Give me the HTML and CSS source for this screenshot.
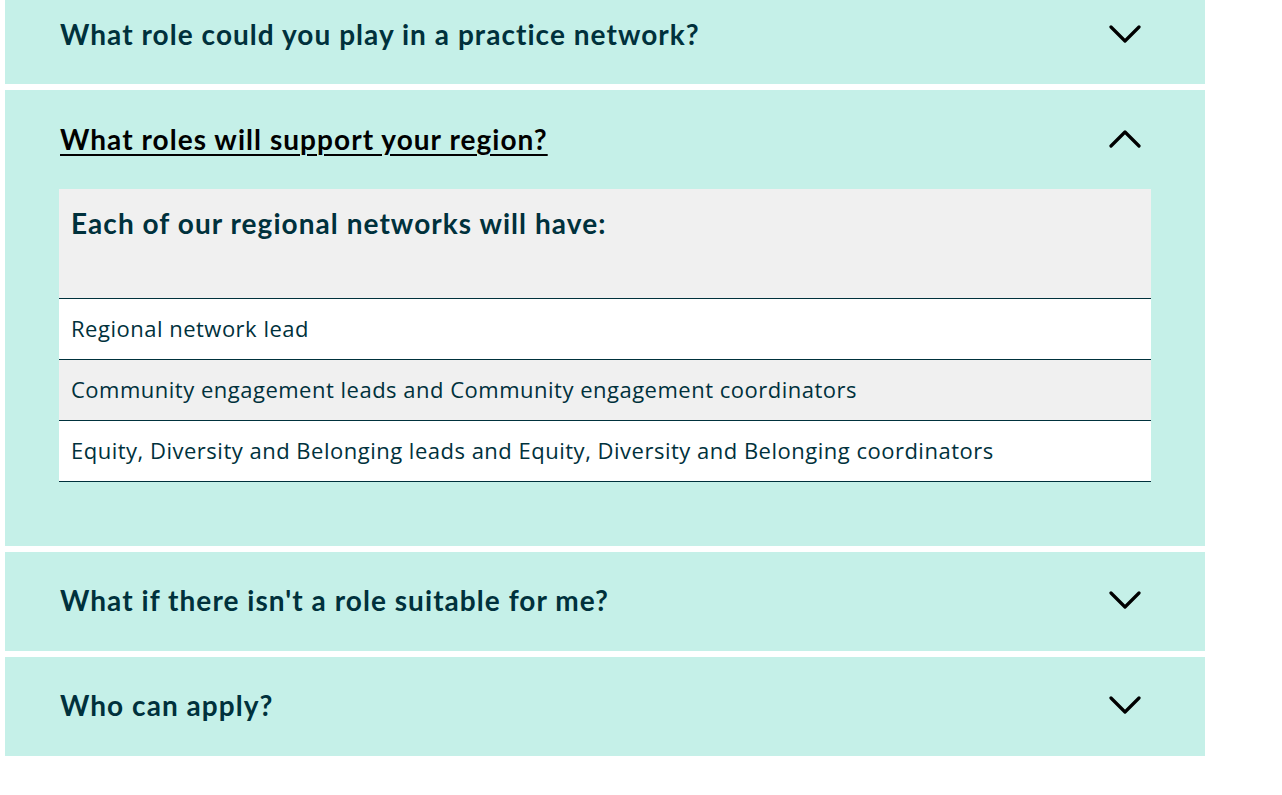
FILE: index.html
```html
<!DOCTYPE html>
<html lang="en">
<head>
<meta charset="utf-8">
<title>FAQ</title>
<link rel="stylesheet" href="styles.css">
</head>
<body>
<div class="accordion">
  <section class="item">
    <button class="item-head">
      <span class="item-title">What role could you play in a practice network?</span>
      <svg class="chev" width="32" height="18" viewBox="0 0 32 18"><polyline points="2,2 16,16 30,2" fill="none" stroke="#000" stroke-width="3.2" stroke-linecap="round" stroke-linejoin="round"/></svg>
    </button>
  </section>
  <section class="item open">
    <button class="item-head">
      <span class="item-title active">What roles will support your region?</span>
      <svg class="chev" width="32" height="18" viewBox="0 0 32 18"><polyline points="2,16 16,2 30,16" fill="none" stroke="#000" stroke-width="3.2" stroke-linecap="round" stroke-linejoin="round"/></svg>
    </button>
    <div class="item-body">
      <table class="roles">
        <thead>
          <tr><th>Each of our regional networks will have:</th></tr>
        </thead>
        <tbody>
          <tr class="white"><td>Regional network lead</td></tr>
          <tr class="grey"><td>Community engagement leads and Community engagement coordinators</td></tr>
          <tr class="white"><td>Equity, Diversity and Belonging leads and Equity, Diversity and Belonging coordinators</td></tr>
        </tbody>
      </table>
    </div>
  </section>
  <section class="item">
    <button class="item-head">
      <span class="item-title">What if there isn't a role suitable for me?</span>
      <svg class="chev" width="32" height="18" viewBox="0 0 32 18"><polyline points="2,2 16,16 30,2" fill="none" stroke="#000" stroke-width="3.2" stroke-linecap="round" stroke-linejoin="round"/></svg>
    </button>
  </section>
  <section class="item">
    <button class="item-head">
      <span class="item-title">Who can apply?</span>
      <svg class="chev" width="32" height="18" viewBox="0 0 32 18"><polyline points="2,2 16,16 30,2" fill="none" stroke="#000" stroke-width="3.2" stroke-linecap="round" stroke-linejoin="round"/></svg>
    </button>
  </section>
</div>
</body>
</html>
```

FILE: styles.css
```css
* { box-sizing: border-box; }
html, body { margin: 0; padding: 0; background: #fff; }
body { overflow: hidden; }

.accordion {
  width: 1200px;
  margin: -15px 0 0 5px;
  display: flex;
  flex-direction: column;
  gap: 6px;
}

.item {
  background: #c5f0e8;
}

.item-head {
  width: 100%;
  height: 99px;
  display: flex;
  align-items: center;
  justify-content: space-between;
  padding: 0 64px 2px 55px;
  border: 0;
  background: transparent;
  cursor: pointer;
  text-align: left;
}

.item-title {
  font-family: "Lato", "Noto Sans", sans-serif;
  font-weight: 700;
  font-size: 28px;
  color: #00313c;
  letter-spacing: 1.05px;
}

.item-title.active {
  color: #000;
  text-decoration: underline;
  text-decoration-thickness: 2px;
  text-underline-offset: 4px;
}

.chev { display: block; flex: none; }

.item-body {
  padding: 0 54px 64px 54px;
}

.roles {
  width: 100%;
  border-collapse: collapse;
  font-family: "Open Sans", "Noto Sans", sans-serif;
  color: #00313c;
}

.roles th {
  background: #f0f0f0;
  height: 109px;
  padding: 17px 12px 18px;
  text-align: left;
  vertical-align: top;
  font-family: "Lato", "Noto Sans", sans-serif;
  font-weight: 700;
  font-size: 28px;
  letter-spacing: 1.05px;
  border-bottom: 1px solid #00313c;
}

.roles td {
  height: 61px;
  padding: 0 12px 2px;
  font-size: 22px;
  letter-spacing: 0.5px;
  border-bottom: 1px solid #00313c;
}

.roles tr.white td { background: #fff; }
.roles tr.grey td { background: #f0f0f0; }
```
